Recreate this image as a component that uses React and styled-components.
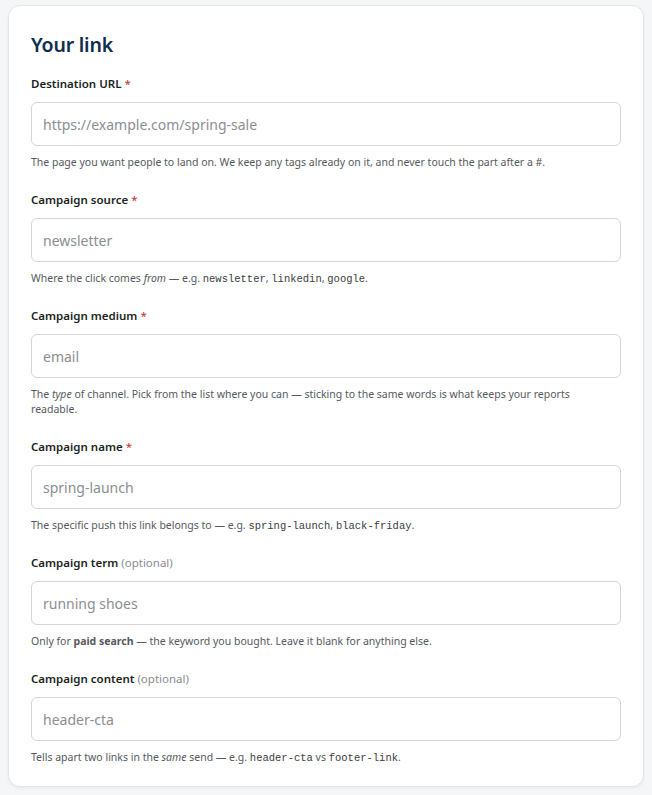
import styled, { createGlobalStyle } from 'styled-components';

const GlobalStyle = createGlobalStyle`
  html, body {
    margin: 0;
    background: #f5f6f7;
  }
  body {
    font-family: "Noto Sans", "Open Sans", sans-serif;
    color: #1f2328;
  }
`;

const Page = styled.div`
  padding: 5px 8px 8px 8px;
`;

const Card = styled.section`
  background: #fff;
  border: 1px solid #e3e5e8;
  border-radius: 12px;
  box-shadow: 0 1px 3px rgba(0, 0, 0, 0.06);
  padding: 26px 22px 21px 22px;
  display: flex;
  flex-direction: column;
`;

const Title = styled.h2`
  margin: 0 0 17px 0;
  font-size: 19.5px;
  line-height: 26px;
  font-weight: 600;
  color: #0d2e4e;
  letter-spacing: -0.2px;
`;

const Fields = styled.div`
  display: flex;
  flex-direction: column;
  gap: 21px;
`;

const Field = styled.div`
  display: flex;
  flex-direction: column;
`;

const Label = styled.label`
  font-size: 11.5px;
  line-height: 18px;
  font-weight: 600;
  color: #1d1f22;
  margin-bottom: 9px;
`;

const Required = styled.span`
  color: #b8342a;
  font-weight: 400;
`;

const Optional = styled.span`
  color: #8a8d91;
  font-weight: 400;
`;

const Input = styled.input`
  box-sizing: border-box;
  height: 44px;
  width: 100%;
  border: 1px solid #d3d5d8;
  border-radius: 6px;
  padding: 0 11px;
  font-family: "Noto Sans", "Open Sans", sans-serif;
  font-size: 14px;
  color: #222;
  background: #fff;
  outline: none;
  &::placeholder {
    color: #8b8e92;
  }
`;

const Help = styled.p`
  margin: 9px 0 0 0;
  max-width: 552px;
  font-size: 10.5px;
  line-height: 15px;
  color: #55595e;
`;

const Code = styled.code`
  font-family: "Liberation Mono", "DejaVu Sans Mono", monospace;
  font-size: 10.5px;
  line-height: 1;
  color: #3a3d41;
`;

const fields = [
  {
    label: 'Destination URL',
    required: true,
    placeholder: 'https://example.com/spring-sale',
    help: <>The page you want people to land on. We keep any tags already on it, and never touch the part after a #.</>,
  },
  {
    label: 'Campaign source',
    required: true,
    placeholder: 'newsletter',
    help: <>Where the click comes <em>from</em> — e.g. <Code>newsletter</Code>, <Code>linkedin</Code>, <Code>google</Code>.</>,
  },
  {
    label: 'Campaign medium',
    required: true,
    placeholder: 'email',
    help: <>The <em>type</em> of channel. Pick from the list where you can — sticking to the same words is what keeps your reports readable.</>,
  },
  {
    label: 'Campaign name',
    required: true,
    placeholder: 'spring-launch',
    help: <>The specific push this link belongs to — e.g. <Code>spring-launch</Code>, <Code>black-friday</Code>.</>,
  },
  {
    label: 'Campaign term',
    required: false,
    placeholder: 'running shoes',
    help: <>Only for <strong>paid search</strong> — the keyword you bought. Leave it blank for anything else.</>,
  },
  {
    label: 'Campaign content',
    required: false,
    placeholder: 'header-cta',
    help: <>Tells apart two links in the <em>same</em> send — e.g. <Code>header-cta</Code> vs <Code>footer-link</Code>.</>,
  },
];

function App() {
  return (
    <Page>
      <GlobalStyle />
      <Card>
        <Title>Your link</Title>
        <Fields>
          {fields.map((f) => (
            <Field key={f.label}>
              <Label>
                {f.label}{' '}
                {f.required ? <Required>*</Required> : <Optional>(optional)</Optional>}
              </Label>
              <Input placeholder={f.placeholder} />
              <Help>{f.help}</Help>
            </Field>
          ))}
        </Fields>
      </Card>
    </Page>
  );
}

export default App;
